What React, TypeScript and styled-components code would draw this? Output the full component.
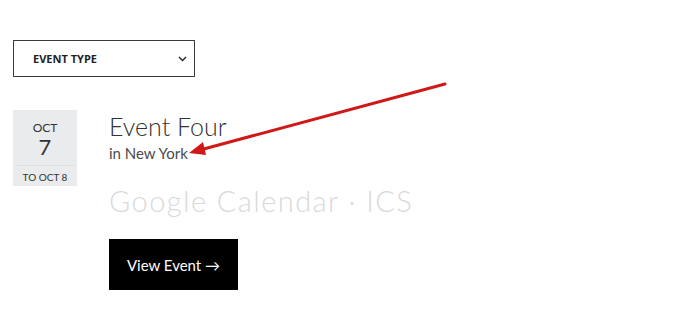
import styled, { createGlobalStyle } from 'styled-components'

const Global = createGlobalStyle`
  html, body {
    margin: 0;
    padding: 0;
    background: #fff;
  }
  body {
    font-family: Lato, 'Open Sans', sans-serif;
    color: #333;
  }
`

const Page = styled.div`
  position: relative;
  width: 700px;
  height: 319px;
  padding: 40px 0 0 13px;
  box-sizing: border-box;
  overflow: hidden;
`

const Select = styled.div`
  width: 182px;
  height: 37px;
  box-sizing: border-box;
  border: 1px solid #3a3a3a;
  display: flex;
  align-items: center;
  justify-content: space-between;
  padding: 0 7px 0 19px;
  font-family: 'Open Sans', sans-serif;
  font-size: 11px;
  font-weight: 700;
  color: #222;
`

const Event = styled.div`
  display: flex;
  gap: 32px;
  margin-top: 33px;
`

const DateBox = styled.div`
  width: 64px;
  height: 76px;
  background: #e9ebed;
  display: flex;
  flex-direction: column;
  align-items: center;
  box-sizing: border-box;
  padding-top: 11px;
`

const Month = styled.div`
  font-size: 12px;
  line-height: 14px;
  color: #333;
`

const Day = styled.div`
  font-size: 22px;
  line-height: 24px;
  color: #333;
`

const Until = styled.div`
  margin-top: 6px;
  width: 58px;
  border-top: 1px solid #dcdfe2;
  text-align: center;
  font-size: 10px;
  padding-top: 5px;
  color: #333;
`

const Body = styled.div`
  display: flex;
  flex-direction: column;
  align-items: flex-start;
`

const Title = styled.div`
  font-size: 25px;
  font-weight: 300;
  line-height: 30px;
  margin-top: 1px;
  color: #333;
`

const Place = styled.div`
  font-size: 15px;
  font-weight: 400;
  margin-top: 3px;
  color: #4a4a4a;
`

const Links = styled.div`
  margin-top: 22px;
  font-size: 29px;
  line-height: 34px;
  font-weight: 300;
  color: #d9d9d9;
  letter-spacing: 1.45px;
`

const Button = styled.div`
  margin-top: 21px;
  width: 129px;
  height: 51px;
  background: #000;
  color: #fff;
  display: flex;
  align-items: center;
  justify-content: center;
  font-size: 15px;
`

const Annotation = styled.svg`
  position: absolute;
  left: 0;
  top: 0;
  pointer-events: none;
`

const Chevron = () => (
  <svg width="9" height="6" viewBox="0 0 9 6">
    <path d="M1 1l3.5 3.5L8 1" fill="none" stroke="#222" strokeWidth="1.4" />
  </svg>
)

export default function App() {
  return (
    <Page>
      <Global />
      <Select>
        EVENT TYPE
        <Chevron />
      </Select>
      <Event>
        <DateBox>
          <Month>OCT</Month>
          <Day>7</Day>
          <Until>TO OCT 8</Until>
        </DateBox>
        <Body>
          <Title>Event Four</Title>
          <Place>in New York</Place>
          <Links>Google Calendar · ICS</Links>
          <Button>View Event →</Button>
        </Body>
      </Event>
      <Annotation width="700" height="319">
        <line x1="445" y1="84" x2="200" y2="150" stroke="#d01818" strokeWidth="3" strokeLinecap="round" />
        <polygon points="189,153 203,142 206,155" fill="#d01818" />
      </Annotation>
    </Page>
  )
}
